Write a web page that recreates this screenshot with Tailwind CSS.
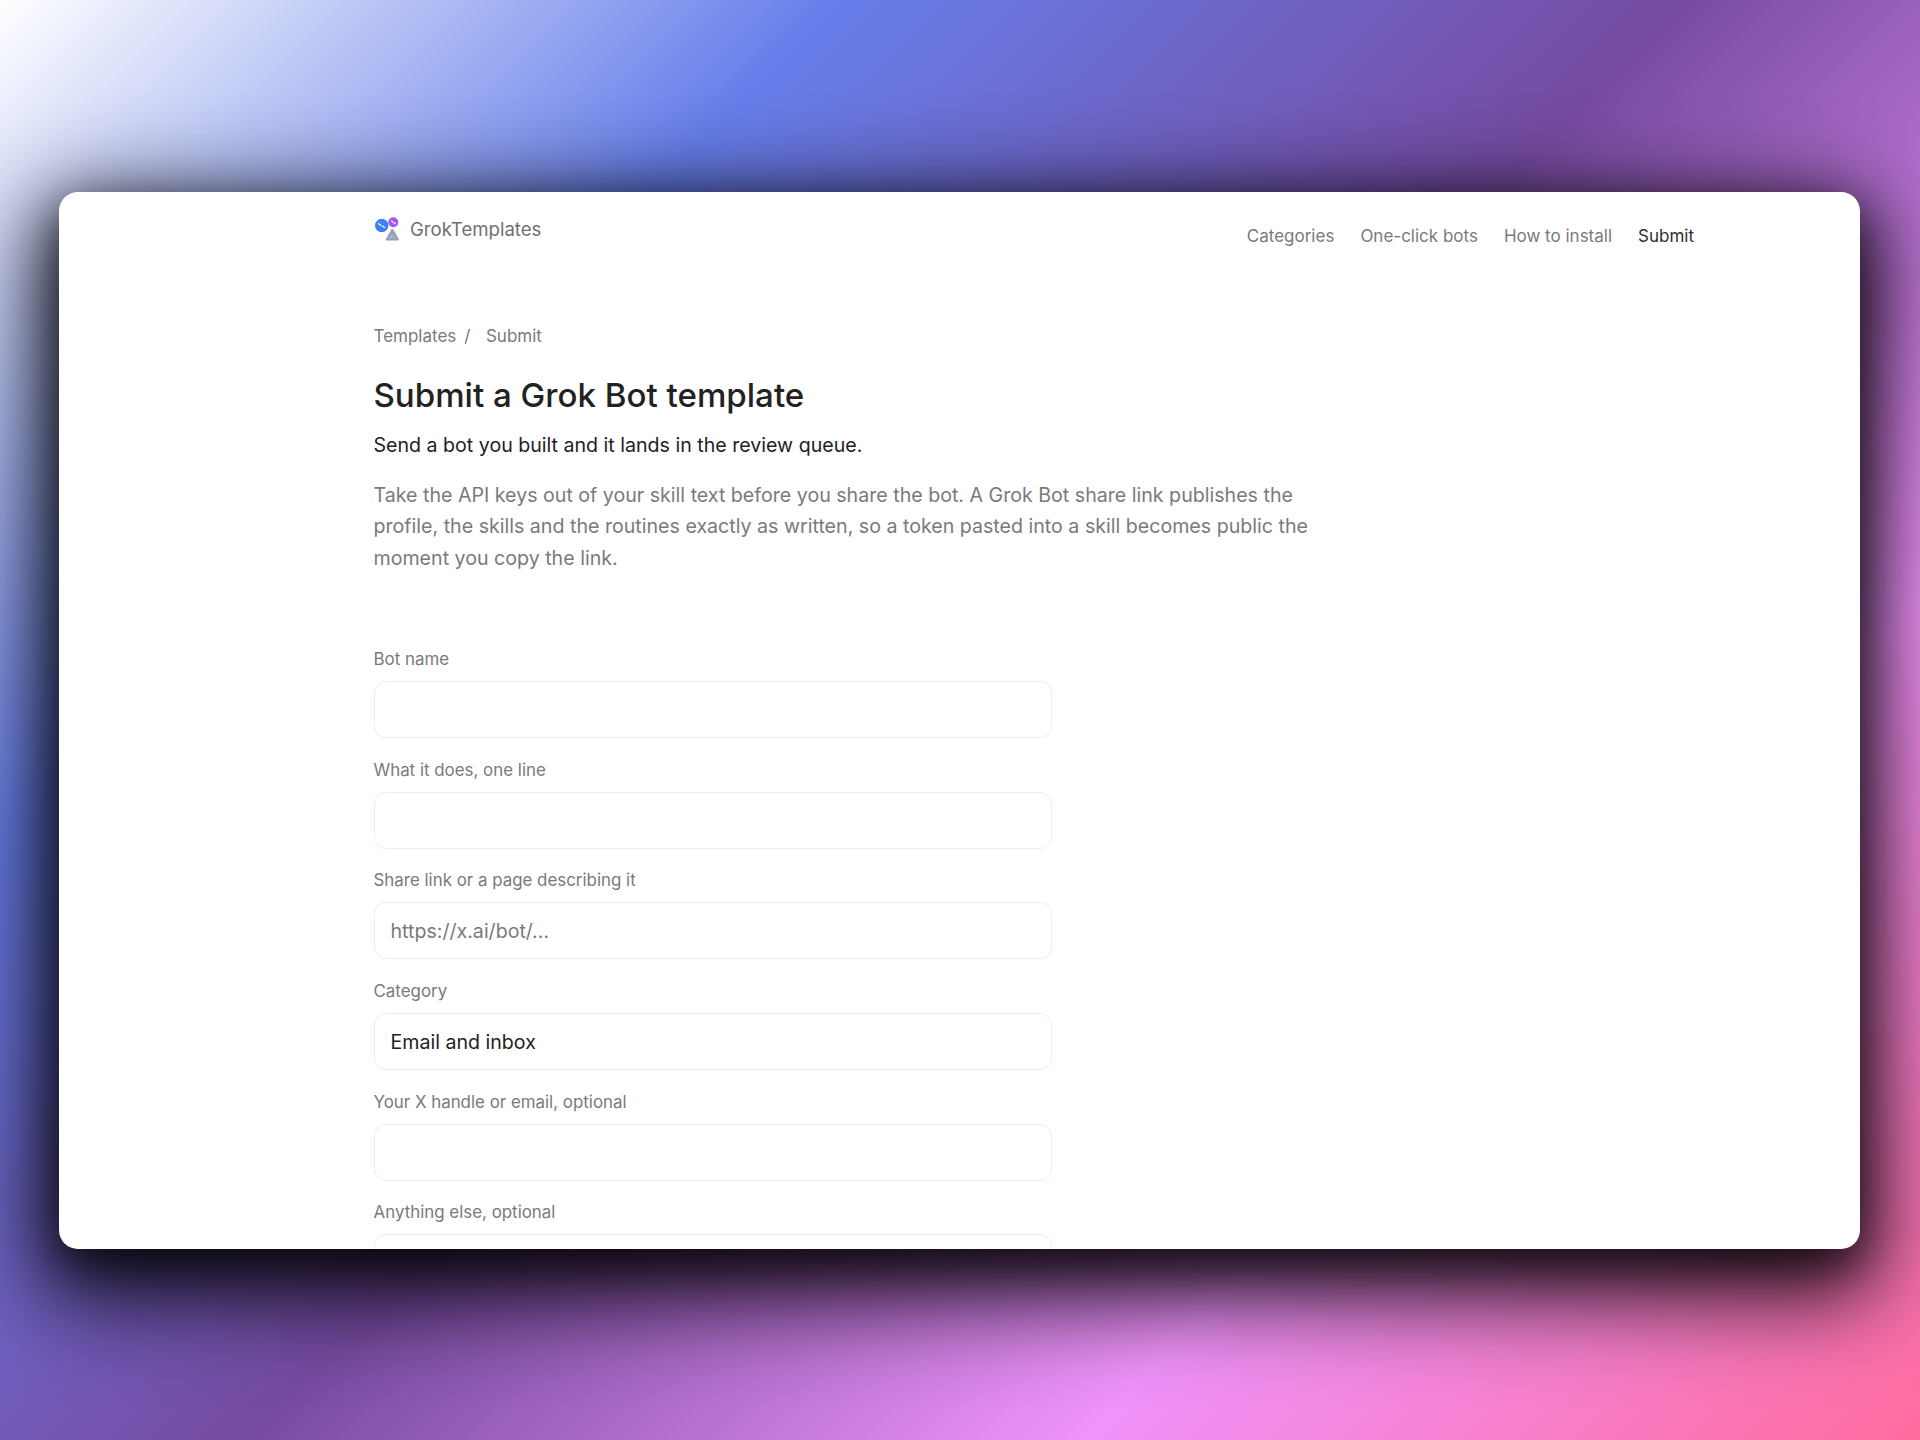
<!doctype html>
<html lang="en">
<head>
<meta charset="utf-8">
<script src="https://cdn.jsdelivr.net/npm/@tailwindcss/browser@4"></script>
</head>
<body class="m-0 h-[1440px] overflow-hidden font-['Inter',sans-serif]">
<main class="h-[1440px] w-[1920px] pt-[192px] pl-[59px] bg-[linear-gradient(135deg,#ffffff_0%,#667eea_25%,#764ba2_50%,#f093fb_75%,#ff6b9d_100%)]">
  <div class="h-[1057px] w-[1801px] overflow-hidden rounded-[19px] bg-white pl-[314.5px] pr-[166px] pt-[25px] shadow-[0_30px_90px_20px_rgba(0,0,0,0.85),0_16px_44px_rgba(0,0,0,0.55)]">
    <header class="flex items-start justify-between">
      <a class="flex h-[25px] items-center gap-[10.5px] text-[18.6px] leading-[24px] text-[#707070]">
        <svg class="h-[26px] w-[26px] shrink-0" viewBox="0 0 26 26" aria-hidden="true">
          <circle cx="7.7" cy="8.5" r="6.7" fill="#3b82f6"/>
          <circle cx="19.3" cy="5.3" r="5" fill="#a855f7"/>
          <path d="M18.3 12.8 L24 22.5 L12.7 22.5 Z" fill="#94a3b8" stroke="#94a3b8" stroke-width="2" stroke-linejoin="round"/>
          <path d="M4.6 6.7l2.2 1.6M8.4 8.9l2.2 1.6M17.6 4.1l1.2.9M20 5.7l1.2.9" stroke="#fff" stroke-width="1.2" stroke-linecap="round" fill="none"/>
          <path d="M16.6 20.3l1.1-1.1M18.7 19.1l.9 1.1" stroke="#e2e8f0" stroke-width="0.9" stroke-linecap="round" fill="none"/>
        </svg>
        <span class="mb-[2px]">GrokTemplates</span>
      </a>
      <nav class="flex gap-[26px] pt-[7px] text-[17px] leading-[24px] text-[#7a7a7a]">
        <a>Categories</a>
        <a>One-click bots</a>
        <a>How to install</a>
        <a class="text-[#2f2f2f]">Submit</a>
      </nav>
    </header>

    <div class="mt-[76px] flex text-[17px] leading-[24px] text-[#7a7a7a]">
      <span>Templates</span><span class="ml-[8px]">/</span><span class="ml-[15.5px]">Submit</span>
    </div>

    <h1 class="mt-[25px] text-[33.1px] font-medium leading-[44px] text-[#222222]">Submit a Grok Bot template</h1>
    <p class="mt-[14px] text-[19.6px] leading-[28px] text-[#222222]">Send a bot you built and it lands in the review queue.</p>
    <p class="mt-[21px] w-[960px] text-[19.62px] leading-[31.3px] text-[#7a7a7a]">Take the API keys out of your skill text before you share the bot. A Grok Bot share link publishes the profile, the skills and the routines exactly as written, so a token pasted into a skill becomes public the moment you copy the link.</p>

    <form class="mt-[74px] flex w-[678px] flex-col gap-[20.7px]">
      <label class="flex flex-col gap-[10px] text-[16.9px] leading-[23px] text-[#7a7a7a]">Bot name
        <input class="h-[57px] w-full rounded-[12px] border border-[#ededed] bg-white px-[16px] text-[19.6px] text-[#222222] outline-none">
      </label>
      <label class="flex flex-col gap-[10px] text-[16.9px] leading-[23px] text-[#7a7a7a]">What it does, one line
        <input class="h-[57px] w-full rounded-[12px] border border-[#ededed] bg-white px-[16px] text-[19.6px] text-[#222222] outline-none">
      </label>
      <label class="flex flex-col gap-[10px] text-[16.9px] leading-[23px] text-[#7a7a7a]">Share link or a page describing it
        <input placeholder="https://x.ai/bot/..." class="h-[57px] w-full rounded-[12px] border border-[#ededed] bg-white px-[16px] text-[19.6px] text-[#222222] outline-none placeholder:text-[#7a7a7a]">
      </label>
      <label class="flex flex-col gap-[10px] text-[16.9px] leading-[23px] text-[#7a7a7a]">Category
        <input value="Email and inbox" class="h-[57px] w-full rounded-[12px] border border-[#ededed] bg-white px-[16px] pt-[2px] text-[19.6px] text-[#222222] outline-none">
      </label>
      <label class="flex flex-col gap-[10px] text-[16.9px] leading-[23px] text-[#7a7a7a]">Your X handle or email, optional
        <input class="h-[57px] w-full rounded-[12px] border border-[#ededed] bg-white px-[16px] text-[19.6px] text-[#222222] outline-none">
      </label>
      <label class="flex flex-col gap-[10px] text-[16.9px] leading-[23px] text-[#7a7a7a]">Anything else, optional
        <input class="h-[57px] w-full rounded-[12px] border border-[#ededed] bg-white px-[16px] text-[19.6px] text-[#222222] outline-none">
      </label>
    </form>
  </div>
</main>
</body>
</html>
